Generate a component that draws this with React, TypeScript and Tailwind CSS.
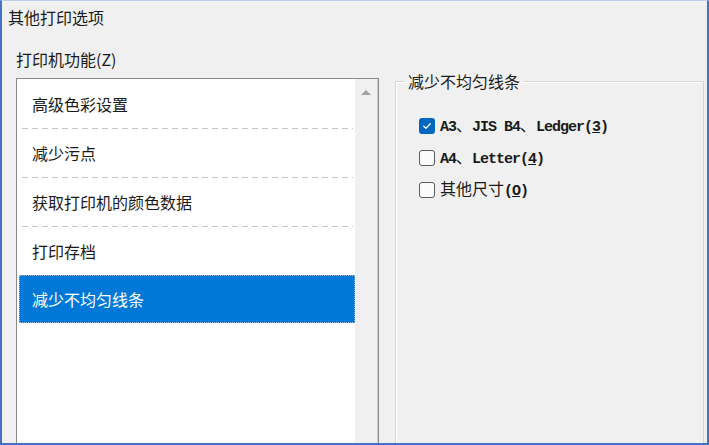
import React from 'react';

const items = ['高级色彩设置', '减少污点', '获取打印机的颜色数据', '打印存档'];

function Mono({ children }: { children: React.ReactNode }) {
  return (
    <span className="font-['Liberation_Mono',monospace] font-bold text-[15px] tracking-[-1px]">{children}</span>
  );
}

function Box({ checked }: { checked?: boolean }) {
  if (checked) {
    return (
      <div className="w-[16px] h-[16px] rounded-[3px] bg-[#0067c0] flex items-center justify-center shrink-0">
        <svg width="10" height="10" viewBox="0 0 10 10" fill="none">
          <path d="M1.8 5.2l2.2 2.2 4.2-4.6" stroke="#fff" strokeWidth="1.3" strokeLinecap="round" strokeLinejoin="round" />
        </svg>
      </div>
    );
  }
  return <div className="w-[16px] h-[16px] rounded-[3px] border border-[#5c5c5c] bg-[#fbfbfb] shrink-0" />;
}

export default function App() {
  return (
    <div className="w-[709px] h-[445px] overflow-hidden bg-[#f0f0f0] border-x-2 border-b-2 border-t border-[#4472c4] border-t-[#bcd0ee] flex flex-col font-['Noto_Sans_CJK_SC',sans-serif] text-[16px] text-[#1a1a1a]">
      {/* title */}
      <div className="pl-[6px] pt-[4px] leading-[24px]">其他打印选项</div>

      <div className="flex flex-1 min-h-0">
        {/* left: feature list */}
        <div className="ml-[14px] w-[363px] flex flex-col shrink-0">
          <div className="mt-[18px] leading-[24px]">打印机功能(Z)</div>
          <div className="mt-[7px] h-[400px] shrink-0 border border-[#8a8a8a] bg-white flex">
            <div className="pl-[2px] pt-[1px] w-[338px] flex flex-col">
              {items.map((t, i) => (
                <div key={t} className={i < 3 ? 'h-[49px] flex flex-col' : 'h-[48px] flex flex-col'}>
                  <div className="flex-1 flex items-center pl-[13px] leading-[24px]">{t}</div>
                  {i < 3 && (
                    <div className="h-px ml-[3px] mr-[2px] bg-[repeating-linear-gradient(90deg,#c4c4c4_0_6px,transparent_6px_10px)]" />
                  )}
                </div>
              ))}
              <div className="h-[48px] border border-dotted border-[#9fb9d8] bg-[#0078d7] text-white flex items-center pl-[12px] leading-[24px]">
                减少不均匀线条
              </div>
            </div>
            <div className="flex-1 bg-[#f0f0f0] border-r border-r-[#d0d0d0] flex justify-center pt-[11px]">
              <div className="w-0 h-0 border-x-[5px] border-x-transparent border-b-[5px] border-b-[#a3a3a3]" />
            </div>
          </div>
        </div>

        {/* right: group box */}
        <fieldset className="ml-[16px] mt-[40px] mr-[3px] flex-1 h-[420px] border border-[#d5d5d5] shadow-[inset_1px_1px_0_#ffffff]">
          <legend className="ml-[8px] px-[4px] leading-[24px]">减少不均匀线条</legend>
          <div className="pt-[17px] pl-[23px] flex flex-col">
            <div className="h-[32px] flex items-center">
              <Box checked />
              <span className="ml-[5px] leading-[24px]">
                <Mono>A3</Mono>、<Mono>JIS B4</Mono>、<Mono>Ledger(<u>3</u>)</Mono>
              </span>
            </div>
            <div className="h-[32px] flex items-center">
              <Box />
              <span className="ml-[5px] leading-[24px]">
                <Mono>A4</Mono>、<Mono>Letter(<u>4</u>)</Mono>
              </span>
            </div>
            <div className="h-[32px] flex items-center">
              <Box />
              <span className="ml-[5px] leading-[24px]">
                其他尺寸<Mono>(<u>O</u>)</Mono>
              </span>
            </div>
          </div>
        </fieldset>
      </div>
    </div>
  );
}
